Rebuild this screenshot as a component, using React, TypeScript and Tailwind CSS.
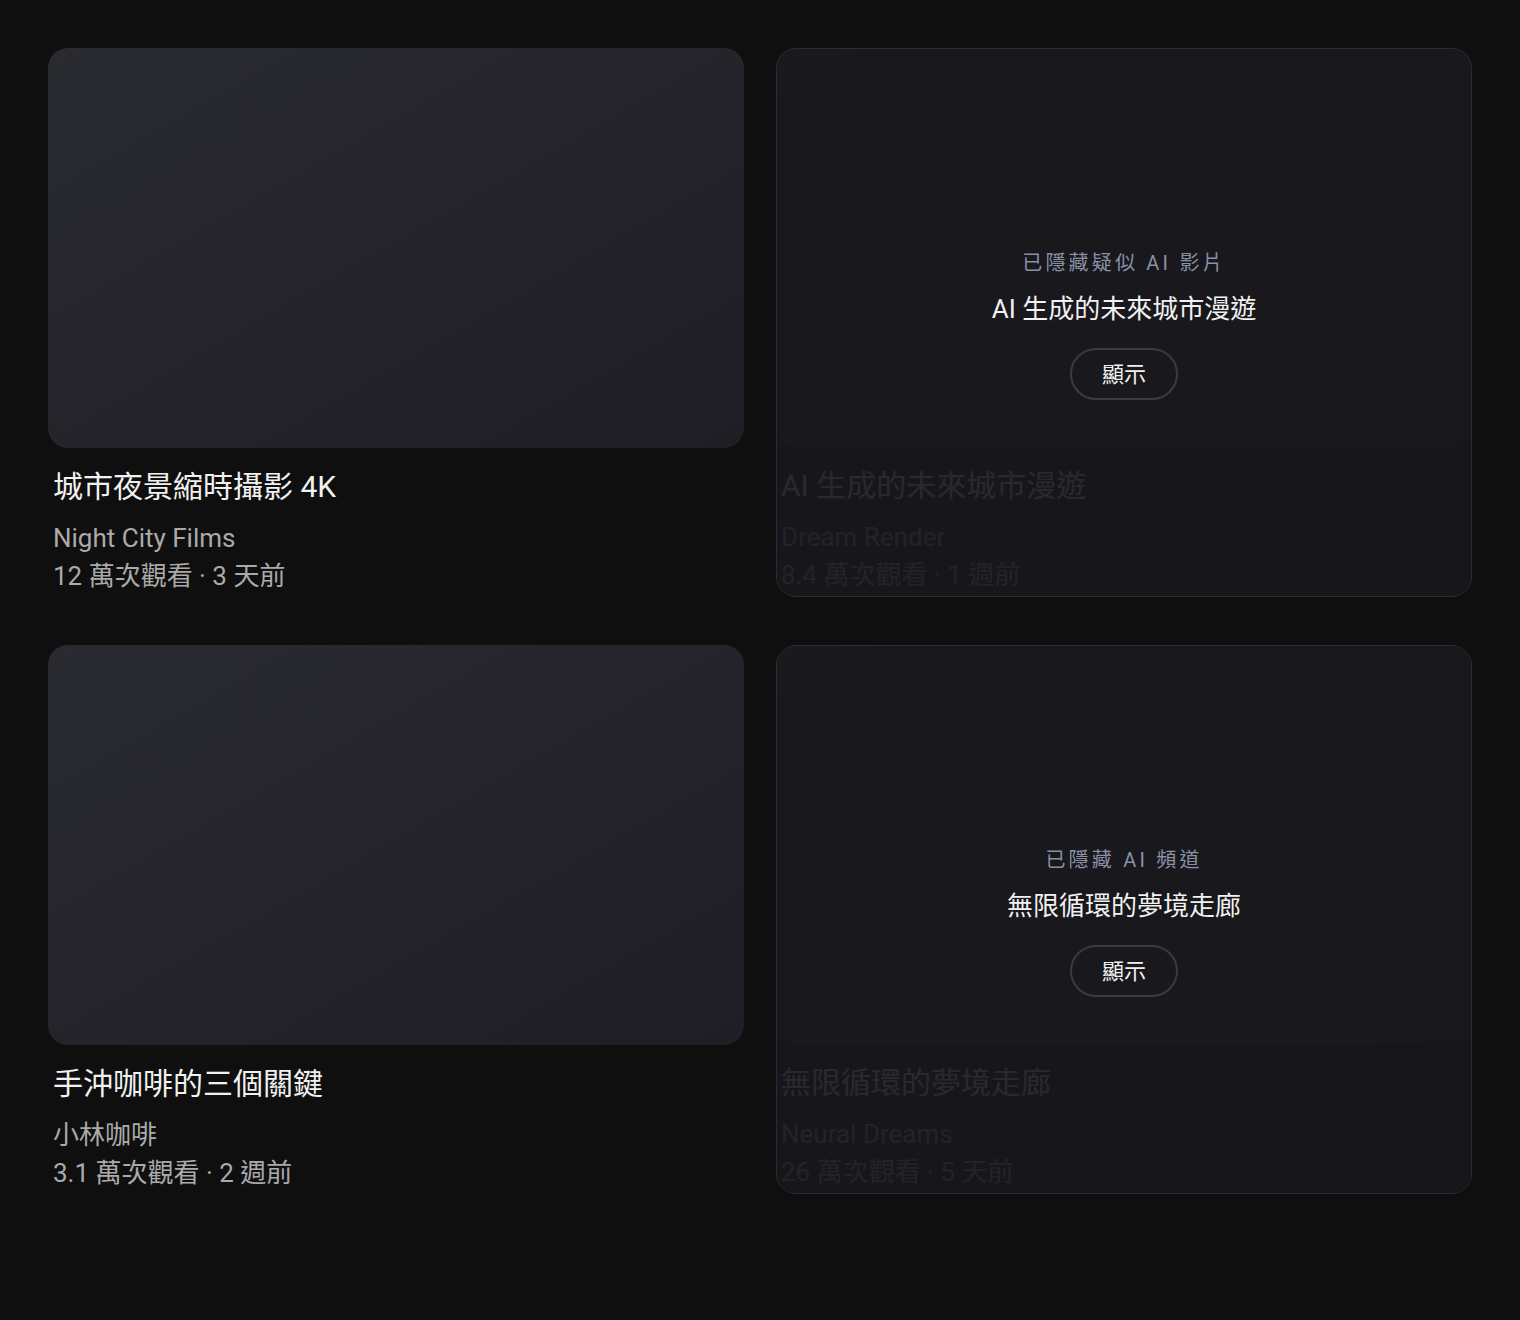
type Video = {
  title: string;
  channel: string;
  meta: string;
  hidden?: string;
};

const videos: Video[] = [
  { title: "城市夜景縮時攝影 4K", channel: "Night City Films", meta: "12 萬次觀看 · 3 天前" },
  { title: "AI 生成的未來城市漫遊", channel: "Dream Render", meta: "8.4 萬次觀看 · 1 週前", hidden: "已隱藏疑似 AI 影片" },
  { title: "手沖咖啡的三個關鍵", channel: "小林咖啡", meta: "3.1 萬次觀看 · 2 週前" },
  { title: "無限循環的夢境走廊", channel: "Neural Dreams", meta: "26 萬次觀看 · 5 天前", hidden: "已隱藏 AI 頻道" },
];

function VideoCard({ video }: { video: Video }) {
  const hidden = !!video.hidden;
  return (
    <div className={"relative rounded-[20px] " + (hidden ? "border border-[#2c2c31]" : "")}>
      <div
        className={
          "rounded-[20px] bg-linear-to-br from-[#2a2a31] to-[#1e1e24] " +
          (hidden ? "h-[398px]" : "h-[400px]")
        }
      />
      <div className={"pb-[2px] " + (hidden ? "px-1" : "px-[5px]")}>
        <h3 className="mt-[19px] text-[30px] leading-[40px] text-[#f1f1f1]">{video.title}</h3>
        <p className="mt-3 text-[26px] leading-[38px] text-[#aaaaaa]">{video.channel}</p>
        <p className="text-[26px] leading-[38px] text-[#aaaaaa]">{video.meta}</p>
      </div>

      {hidden && (
        <div className="absolute inset-0 flex flex-col items-center justify-center rounded-[20px] bg-[#18181c]/[0.92] pt-[4px]">
          <p className="text-[20px] leading-[28px] tracking-[0.16em] text-[#8a90a6]">{video.hidden}</p>
          <p className="mt-4 text-[26px] leading-[32px] text-[#f1f1f1]">{video.title}</p>
          <button className="mt-[23px] flex h-[52px] w-[108px] items-center justify-center rounded-full border-2 border-[#3a3a3f] text-[22px] text-[#f1f1f1]">
            顯示
          </button>
        </div>
      )}
    </div>
  );
}

export default function App() {
  return (
    <div className="min-h-screen bg-[#0f0f0f] font-[Roboto,'Noto_Sans_CJK_TC',sans-serif]">
      <div className="grid grid-cols-2 gap-x-8 gap-y-12 p-12">
        {videos.map((v) => (
          <VideoCard key={v.title} video={v} />
        ))}
      </div>
    </div>
  );
}
